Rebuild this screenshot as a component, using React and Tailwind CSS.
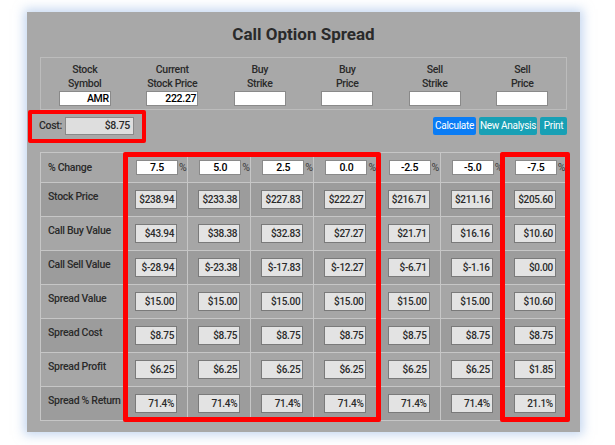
import React from 'react'

const fields = [
  ['Stock', 'Symbol', 'AMR'],
  ['Current', 'Stock Price', '222.27'],
  ['Buy', 'Strike', ''],
  ['Buy', 'Price', ''],
  ['Sell', 'Strike', ''],
  ['Sell', 'Price', ''],
]

const changes = ['7.5', '5.0', '2.5', '0.0', '-2.5', '-5.0', '-7.5']

const rows = [
  ['Stock Price', ['$238.94', '$233.38', '$227.83', '$222.27', '$216.71', '$211.16', '$205.60']],
  ['Call Buy Value', ['$43.94', '$38.38', '$32.83', '$27.27', '$21.71', '$16.16', '$10.60']],
  ['Call Sell Value', ['$-28.94', '$-23.38', '$-17.83', '$-12.27', '$-6.71', '$-1.16', '$0.00']],
  ['Spread Value', ['$15.00', '$15.00', '$15.00', '$15.00', '$15.00', '$15.00', '$10.60']],
  ['Spread Cost', ['$8.75', '$8.75', '$8.75', '$8.75', '$8.75', '$8.75', '$8.75']],
  ['Spread Profit', ['$6.25', '$6.25', '$6.25', '$6.25', '$6.25', '$6.25', '$1.85']],
  ['Spread % Return', ['71.4%', '71.4%', '71.4%', '71.4%', '71.4%', '71.4%', '21.1%']],
]

function Cell({ dark, children, className = '' }) {
  return (
    <div className={`flex items-center border-r border-b border-[#c6c6c6] ${dark ? 'bg-[#9c9c9c]' : 'bg-[#a6a6a6]'} ${className}`}>
      {children}
    </div>
  )
}

export default function App() {
  return (
    <div className="w-[615px] h-[445px] bg-white pt-3 pl-[27px] font-['Roboto',sans-serif] text-[#2a2a2a] tracking-[-0.3px]">
      <div className="w-[553px] h-[420px] bg-[#a8a8a8] px-[13px] shadow-[0_0_10px_3px_rgba(140,175,225,0.5)]">
        {/* Title */}
        <div className="h-[45px] flex items-center justify-center">
          <h1 className="text-[17px] font-bold leading-none tracking-normal">Call Option Spread</h1>
        </div>

        {/* Inputs */}
        <div className="h-[53px] border border-[#bcbcbc] grid grid-cols-6 pt-[5px]">
          {fields.map(([a, b, v], i) => (
            <div key={i} className="flex flex-col items-center">
              <span className="text-[10.5px] leading-[14px] font-medium">{a}</span>
              <span className="text-[10.5px] leading-[14px] font-medium">{b}</span>
              <div className="w-[52px] h-[15px] bg-white border border-[#8a8a8a] text-[10.5px] leading-[13px] font-medium text-right pr-px text-black">
                {v}
              </div>
            </div>
          ))}
        </div>

        {/* Cost + buttons */}
        <div className="mt-[7px] h-[18px] flex items-center justify-between">
          <div className="relative flex items-center -ml-px">
            <span className="text-[10.5px] font-medium mr-[3px]">Cost:</span>
            <div className="w-[69px] h-[18px] bg-[#dedede] border border-[#8a8a8a] text-[10.5px] leading-[16px] font-medium text-right pr-[3px]">
              $8.75
            </div>
            <span className="absolute left-[-11px] right-[-12px] top-[-7px] bottom-[-8px] border-4 border-[#ff0000] rounded-[2px]" />
          </div>
          <div className="flex gap-[3px] text-[10px] text-white whitespace-nowrap">
            <button className="h-[18px] w-[43px] bg-[#0a7cf5] rounded-[2px] leading-none">Calculate</button>
            <button className="h-[18px] w-[58px] bg-[#18a0b5] rounded-[2px] leading-none">New Analysis</button>
            <button className="h-[18px] w-[27px] bg-[#18a0b5] rounded-[2px] leading-none">Print</button>
          </div>
        </div>

        {/* Table */}
        <div className="relative mt-[17px]">
          <div className="grid grid-cols-[84px_repeat(7,1fr)] grid-rows-[30px_repeat(7,34px)] border-t border-l border-[#c6c6c6]">
            <Cell className="pl-[7px] text-[10.5px] font-medium">% Change</Cell>
            {changes.map((c, i) => (
              <Cell key={i} className="pl-[11px]">
                <div className="w-[42px] h-[15px] bg-white border border-[#8a8a8a] text-[10.5px] leading-[13px] font-medium text-center text-black">
                  {c}
                </div>
                <span className="ml-px text-[10.5px] text-[#3a3a3a]">%</span>
              </Cell>
            ))}
            {rows.map(([label, vals], r) => (
              <React.Fragment key={label}>
                <Cell dark={r % 2 === 0} className="pl-[7px] pb-[5px] text-[10.5px] font-medium whitespace-nowrap">
                  {label}
                </Cell>
                {vals.map((v, i) => (
                  <Cell key={i} dark={r % 2 === 0} className="justify-center">
                    <div className="w-[42px] h-[19px] bg-[#e3e3e3] border border-[#7a7a7a] text-[10px] leading-[17px] font-medium text-right pr-[2px]">
                      {v}
                    </div>
                  </Cell>
                ))}
              </React.Fragment>
            ))}
          </div>
          {/* highlight boxes */}
          <span className="absolute left-[83px] top-0 w-[258px] h-[270px] border-[5px] border-[#ff0000] rounded-[2px]" />
          <span className="absolute left-[460px] top-0 w-[70px] h-[270px] border-[5px] border-[#ff0000] rounded-[2px]" />
        </div>
      </div>
    </div>
  )
}
